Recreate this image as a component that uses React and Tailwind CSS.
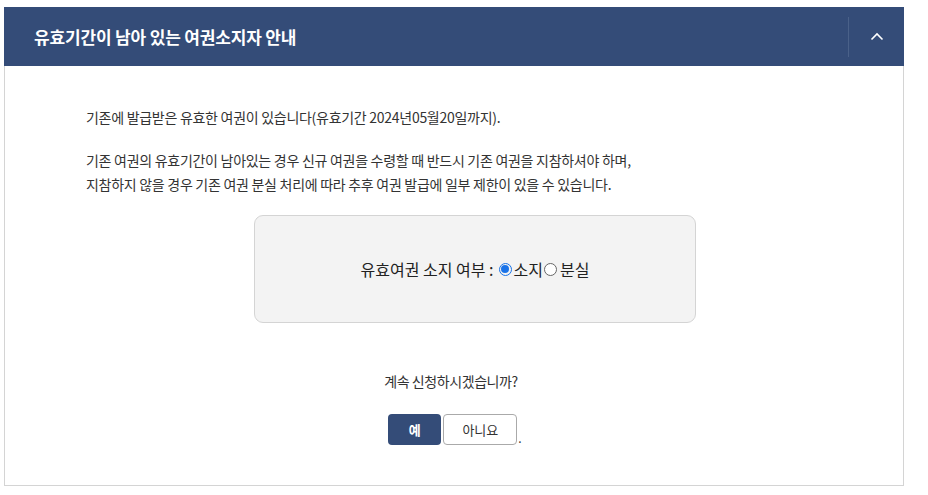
export default function App() {
  return (
    <div className="min-h-[495px] bg-white pl-[4px] pt-[7px] w-[928px]" style={{ fontFamily: '"Noto Sans CJK KR", "Noto Sans", sans-serif' }}>
      <div className="w-[900px]">
        {/* Header */}
        <div className="h-[59px] bg-[#344c78] flex items-center">
          <h2 className="flex-1 pl-[30px] text-white text-[17px] font-bold tracking-[-0.01em]">유효기간이 남아 있는 여권소지자 안내</h2>
          <div className="w-[56px] h-[40px] border-l border-[#4a6189] flex items-center justify-center">
            <svg width="14" height="9" viewBox="0 0 14 9" fill="none">
              <path d="M1.5 7.5 L7 2 L12.5 7.5" stroke="white" strokeWidth="1.6" />
            </svg>
          </div>
        </div>

        {/* Body */}
        <div className="h-[420px] border border-t-0 border-[#d4d4d4] pt-[39px]">
          <div className="pl-[81px] text-[14px] text-[#333] tracking-[-0.02em] leading-[24px]">
            <p>기존에 발급받은 유효한 여권이 있습니다(유효기간 2024년05월20일까지).</p>
            <p className="mt-[19px]">기존 여권의 유효기간이 남아있는 경우 신규 여권을 수령할 때 반드시 기존 여권을 지참하셔야 하며,</p>
            <p>지참하지 않을 경우 기존 여권 분실 처리에 따라 추후 여권 발급에 일부 제한이 있을 수 있습니다.</p>
          </div>

          <div className="ml-[249px] mt-[19px] w-[442px] h-[108px] bg-[#f3f3f3] border border-[#d4d4d4] rounded-[9px] flex items-center justify-center text-[16px] text-[#222]">
            <span>유효여권 소지 여부 :</span>
            <span className="ml-[5px] w-[13px] h-[13px] rounded-full border border-[#1a73e8] flex items-center justify-center">
              <span className="w-[8px] h-[8px] rounded-full bg-[#1a73e8]" />
            </span>
            <span className="ml-[2px]">소지</span>
            <span className="ml-[1px] w-[13px] h-[13px] rounded-full border border-[#666] bg-white" />
            <span className="ml-[3px]">분실</span>
          </div>

          <p className="mt-[48px] text-center pr-[6px] text-[14px] text-[#333] tracking-[-0.03em]">계속 신청하시겠습니까?</p>

          <div className="mt-[22px] flex justify-center items-end pl-[2px]">
            <button className="w-[53px] h-[31px] rounded-[4px] bg-[#344c78] text-white text-[13px] font-bold">예</button>
            <button className="ml-[2px] w-[74px] h-[31px] rounded-[4px] bg-white border border-[#aaa] text-[#333] text-[13px]">아니요</button>
            <span className="ml-[1px] text-[12px] text-[#333] leading-[14px]">.</span>
          </div>
        </div>
      </div>
    </div>
  )
}
